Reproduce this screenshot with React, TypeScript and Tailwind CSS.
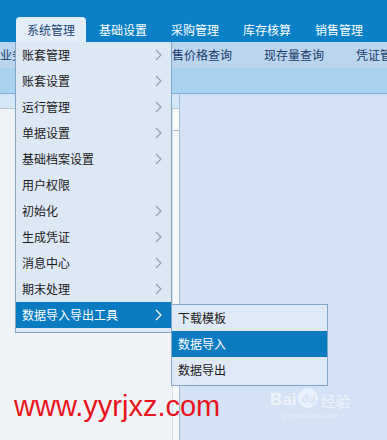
import React from 'react';

const TABS = ['系统管理', '基础设置', '采购管理', '库存核算', '销售管理'];
const SUBBAR = ['业务导航', '采购订单', '销售价格查询', '现存量查询', '凭证管理'];

const MENU = [
  { label: '账套管理', sub: true },
  { label: '账套设置', sub: true },
  { label: '运行管理', sub: true },
  { label: '单据设置', sub: true },
  { label: '基础档案设置', sub: true },
  { label: '用户权限', sub: false },
  { label: '初始化', sub: true },
  { label: '生成凭证', sub: true },
  { label: '消息中心', sub: true },
  { label: '期末处理', sub: true },
  { label: '数据导入导出工具', sub: true, active: true },
];

const SUBMENU = [
  { label: '下载模板' },
  { label: '数据导入', active: true },
  { label: '数据导出' },
];

function Chevron({ light }: { light?: boolean }) {
  return (
    <svg width="7" height="12" viewBox="0 0 7 12" className="shrink-0">
      <polyline
        points="1,1 6,6 1,11"
        fill="none"
        stroke={light ? '#ffffff' : '#8f9dad'}
        strokeWidth="1.2"
      />
    </svg>
  );
}

export default function App() {
  return (
    <div className="relative w-[387px] h-[440px] overflow-hidden flex flex-col bg-[#d3e3f5] font-['Noto_Sans_CJK_SC','Noto_Sans',sans-serif] text-[12px] leading-none">
      {/* top menu bar */}
      <div className="h-[42px] shrink-0 bg-[#0b80c6] flex items-end pl-[16px]">
        {TABS.map((t, i) => (
          <div
            key={t}
            className={
              i === 0
                ? 'w-[70px] h-[25px] mr-[1px] flex items-center justify-center rounded-t-[4px] bg-[#e3edf8] text-[#1b4476]'
                : 'w-[72px] h-[25px] flex items-center justify-center text-white'
            }
          >
            {t}
          </div>
        ))}
      </div>

      {/* quick bar */}
      <div className="h-[26px] shrink-0 bg-[#bcd5ee] flex items-center gap-[32px] text-[#173a6a] whitespace-nowrap overflow-hidden">
        {SUBBAR.map((s) => (
          <span key={s}>{s}</span>
        ))}
      </div>

      {/* toolbar band */}
      <div className="h-[26px] shrink-0 bg-[#a8d3f0] border-b border-[#7eaed8]" />

      {/* body */}
      <div className="flex-1 flex">
        <div className="w-[180px] flex flex-col border-r border-[#a6bbd2] bg-[#eff3f8]">
          <div className="h-[15px] bg-[#d5e6f6] border-b border-[#b7c5d5]" />
          <div className="flex-1 flex justify-end">
            <div className="w-[7px] flex flex-col bg-[#f6f8fb] border-l border-[#d5dde8]">
              <div className="h-[22px] bg-[#fafbfc] border-b border-[#a9b4c2]" />
            </div>
          </div>
        </div>
        <div className="flex-1" />
      </div>

      {/* main dropdown */}
      <div className="absolute left-[15px] top-[42px] w-[157px] pb-[4px] bg-[#dde8f5] border border-[#86a4c4] border-t-0">
        {MENU.map((m) => (
          <div
            key={m.label}
            className={
              'h-[26px] flex items-center justify-between pl-[6px] pr-[9px] ' +
              (m.active ? 'bg-[#0b7bc1] text-white' : 'text-[#1a1a1a]')
            }
          >
            <span>{m.label}</span>
            {m.sub && <Chevron light={m.active} />}
          </div>
        ))}
      </div>

      {/* sub dropdown */}
      <div className="absolute left-[171px] top-[304px] w-[157px] pb-[2px] bg-[#dfe9f6] border border-[#86a4c4]">
        {SUBMENU.map((m) => (
          <div
            key={m.label}
            className={
              'h-[26px] flex items-center pl-[6px] ' +
              (m.active ? 'bg-[#0b7bc1] text-white' : 'text-[#1a1a1a]')
            }
          >
            {m.label}
          </div>
        ))}
      </div>

      {/* watermarks */}
      <div className="absolute left-[14px] top-[392px] text-[29px] text-[#e8141c] font-['Liberation_Sans',Arial,sans-serif] leading-none">
        www.yyrjxz.com
      </div>
      <div className="absolute left-[270px] top-[388px] flex flex-col items-center text-white/60">
        <div className="flex items-end gap-[2px]">
          <span className="text-[17px] font-bold font-['Liberation_Sans',Arial,sans-serif]">Bai</span>
          <span className="w-[20px] h-[20px] rounded-full bg-white/50 text-[#d3e3f5] text-[11px] font-bold flex items-center justify-center">
            du
          </span>
          <span className="text-[15px]">经验</span>
        </div>
        <span className="text-[7px] mt-[4px] text-white/40 font-['Liberation_Sans',Arial,sans-serif]">
          jingyan.baidu.com
        </span>
      </div>
    </div>
  );
}
